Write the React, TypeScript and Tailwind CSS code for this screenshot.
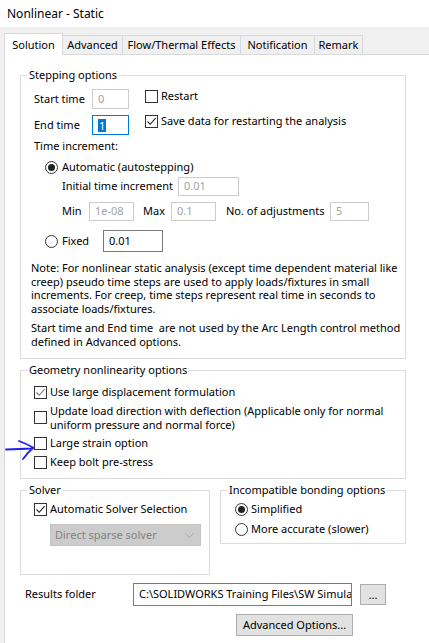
import type { ReactNode } from "react";

const TABS = [
  { label: "Solution", w: "w-[59px]", active: true },
  { label: "Advanced", w: "w-[60px]" },
  { label: "Flow/Thermal Effects", w: "w-[118px]" },
  { label: "Notification", w: "w-[74px]" },
  { label: "Remark", w: "w-[48px]" },
];

function CheckBox({ checked, muted }: { checked?: boolean; muted?: boolean }) {
  return (
    <span className="w-[13px] h-[13px] shrink-0 border border-[#333333] bg-white flex items-center justify-center">
      {checked && (
        <svg width="11" height="11" viewBox="0 0 11 11" aria-hidden="true">
          <path d="M1.5 5.5 L4.2 8.3 L9.6 2.2" fill="none" stroke={muted ? "#7a7a7a" : "#222222"} strokeWidth="1.1" />
        </svg>
      )}
    </span>
  );
}

function Radio({ on }: { on?: boolean }) {
  return (
    <span className="w-[13px] h-[13px] shrink-0 rounded-full border border-[#333333] bg-white flex items-center justify-center">
      {on && <span className="w-[7px] h-[7px] rounded-full bg-[#222222]" />}
    </span>
  );
}

function Field({ w, children, enabled }: { w: string; children: ReactNode; enabled?: boolean }) {
  return (
    <div
      className={`${w} h-full shrink-0 flex items-center px-[5px] bg-white border ${
        enabled ? "border-[#7a7a7a] text-black" : "border-[#cccccc] text-[#a3a3a3]"
      }`}
    >
      {children}
    </div>
  );
}

function Group({ label, className, children }: { label: string; className: string; children: ReactNode }) {
  return (
    <div className={`relative border border-[#dcdcdc] ${className}`}>
      <span className="absolute left-[6px] -top-[9px] bg-white px-[2px] leading-[16px]">{label}</span>
      {children}
    </div>
  );
}

export default function App() {
  return (
    <div className="w-[429px] h-[643px] overflow-hidden whitespace-nowrap bg-[#f0f0f0] text-[11px] text-black font-['Noto_Sans',sans-serif]">
      <div className="h-[27px] bg-white pl-[7px] flex items-center text-[12px]">Nonlinear - Static</div>

      {/* tabs */}
      <div className="h-[27px] flex items-end pl-[4px]">
        {TABS.map((t) =>
          t.active ? (
            <div
              key={t.label}
              className={`${t.w} h-[22px] -mb-[1px] relative z-10 bg-white border-l border-t border-r border-[#d9d9d9] flex items-start justify-center pt-[3px]`}
            >
              {t.label}
            </div>
          ) : (
            <div
              key={t.label}
              className={`${t.w} h-[19px] border-t border-r border-[#d9d9d9] flex items-center justify-center`}
            >
              {t.label}
            </div>
          )
        )}
      </div>

      {/* panel */}
      <div className="ml-[4px] h-[589px] bg-white border-l border-t border-[#d9d9d9] pl-[15px] pt-[20px] relative">
        <Group label="Stepping options" className="w-[386px] h-[284px]">
          <div className="flex flex-col pl-[13px]">
            <div className="mt-[13px] h-[20px] flex items-center">
              <span className="w-[58px]">Start time</span>
              <Field w="w-[37px]">0</Field>
              <div className="self-start flex items-center ml-[16px] h-[14px]">
                <CheckBox />
                <span className="ml-[3px]">Restart</span>
              </div>
            </div>
            <div className="mt-[6px] h-[20px] flex items-center">
              <span className="w-[58px]">End time</span>
              <div className="w-[37px] h-full shrink-0 flex items-center px-[5px] bg-white border border-[#0078d7]">
                <span className="bg-[#0078d7] text-white leading-[13px] px-[1px]">1</span>
              </div>
              <div className="self-start -mt-[1px] flex items-center ml-[16px] h-[14px]">
                <CheckBox checked />
                <span className="ml-[3px]">Save data for restarting the analysis</span>
              </div>
            </div>
            <div className="mt-[4px] h-[14px] flex items-center">Time increment:</div>
            <div className="mt-[7px] h-[14px] flex items-center pl-[11px]">
              <Radio on />
              <span className="ml-[4px]">Automatic (autostepping)</span>
            </div>
            <div className="mt-[3px] h-[19px] flex items-center pl-[28px]">
              <span className="w-[116px]">Initial time increment</span>
              <Field w="w-[61px]">0.01</Field>
            </div>
            <div className="mt-[6px] h-[19px] flex items-center pl-[28px]">
              <span className="w-[27px]">Min</span>
              <Field w="w-[45px]">1e-08</Field>
              <span className="ml-[9px] w-[28px]">Max</span>
              <Field w="w-[45px]">0.1</Field>
              <span className="ml-[10px] w-[104px]">No. of adjustments</span>
              <Field w="w-[39px]">5</Field>
            </div>
            <div className="mt-[9px] h-[22px] flex items-center pl-[11px]">
              <Radio />
              <span className="ml-[4px] w-[41px]">Fixed</span>
              <Field w="w-[60px]" enabled>
                0.01
              </Field>
            </div>
            <p className="mt-[9px] -ml-[3px] leading-[13.6px]">
              Note: For nonlinear static analysis (except time dependent material like
              <br />
              creep) pseudo time steps are used to apply loads/fixtures in small
              <br />
              increments. For creep, time steps represent real time in seconds to
              <br />
              associate loads/fixtures.
            </p>
            <p className="mt-[6px] -ml-[3px] leading-[13.6px]">
              Start time and End time&nbsp; are not used by the Arc Length control method
              <br />
              defined in Advanced options.
            </p>
          </div>
        </Group>

        <Group label="Geometry nonlinearity options" className="mt-[11px] w-[386px] h-[109px]">
          <div className="flex flex-col pl-[13px]">
            <div className="mt-[14px] h-[14px] flex items-center">
              <CheckBox checked muted />
              <span className="ml-[3px]">Use large displacement formulation</span>
            </div>
            <div className="mt-[5px] flex items-center">
              <CheckBox />
              <span className="ml-[3px] leading-[13.5px]">
                Update load direction with deflection (Applicable only for normal
                <br />
                uniform pressure and normal force)
              </span>
            </div>
            <div className="mt-[5px] h-[14px] flex items-center">
              <CheckBox />
              <span className="ml-[3px]">Large strain option</span>
            </div>
            <div className="mt-[5px] h-[14px] flex items-center">
              <CheckBox />
              <span className="ml-[3px]">Keep bolt pre-stress</span>
            </div>
          </div>
        </Group>

        {/* hand-drawn annotation arrow */}
        <svg className="absolute left-0 top-[383px]" width="32" height="24" viewBox="0 0 32 24" aria-hidden="true">
          <path
            d="M1 11.5 L28 10.5 M14 3 Q22 6 28.5 9.8 Q23 14 18 21"
            fill="none"
            stroke="#1f1fef"
            strokeWidth="1.8"
            strokeLinecap="round"
            strokeLinejoin="round"
          />
        </svg>

        <div className="mt-[11px] flex items-start gap-[10px]">
          <Group label="Solver" className="w-[190px] h-[85px]">
            <div className="mt-[11px] h-[14px] flex items-center pl-[13px]">
              <CheckBox checked />
              <span className="ml-[3px]">Automatic Solver Selection</span>
            </div>
            <div className="mt-[8px] ml-[29px] w-[151px] h-[22px] bg-[#cccccc] border border-[#c4c4c4] flex items-center justify-between pl-[4px] pr-[6px] text-[#838383]">
              <span>Direct sparse solver</span>
              <svg width="9" height="5" viewBox="0 0 9 5" aria-hidden="true">
                <path d="M0.5 0.5 L4.5 4.5 L8.5 0.5" fill="none" stroke="#a8a8a8" strokeWidth="1" />
              </svg>
            </div>
          </Group>
          <Group label="Incompatible bonding options" className="w-[186px] h-[54px]">
            <div className="mt-[11px] h-[14px] flex items-center pl-[14px]">
              <Radio on />
              <span className="ml-[3px]">Simplified</span>
            </div>
            <div className="mt-[6px] h-[14px] flex items-center pl-[14px]">
              <Radio />
              <span className="ml-[3px]">More accurate (slower)</span>
            </div>
          </Group>
        </div>

        <div className="mt-[8px] flex items-start">
          <span className="ml-[5px] w-[108px] h-[23px] flex items-center">Results folder</span>
          <div className="w-[219px] h-[23px] border border-[#7a7a7a] flex items-center pl-[5px] overflow-hidden">
            C:\SOLIDWORKS Training Files\SW Simulation
          </div>
          <button className="ml-[8px] mt-[1px] w-[26px] h-[21px] bg-[#e1e1e1] border border-[#adadad] flex items-center justify-center leading-none">
            ...
          </button>
        </div>
        <button className="mt-[8px] ml-[216px] w-[117px] h-[22px] bg-[#e1e1e1] border border-[#adadad] flex items-center justify-center">
          Advanced Options...
        </button>
      </div>
    </div>
  );
}
